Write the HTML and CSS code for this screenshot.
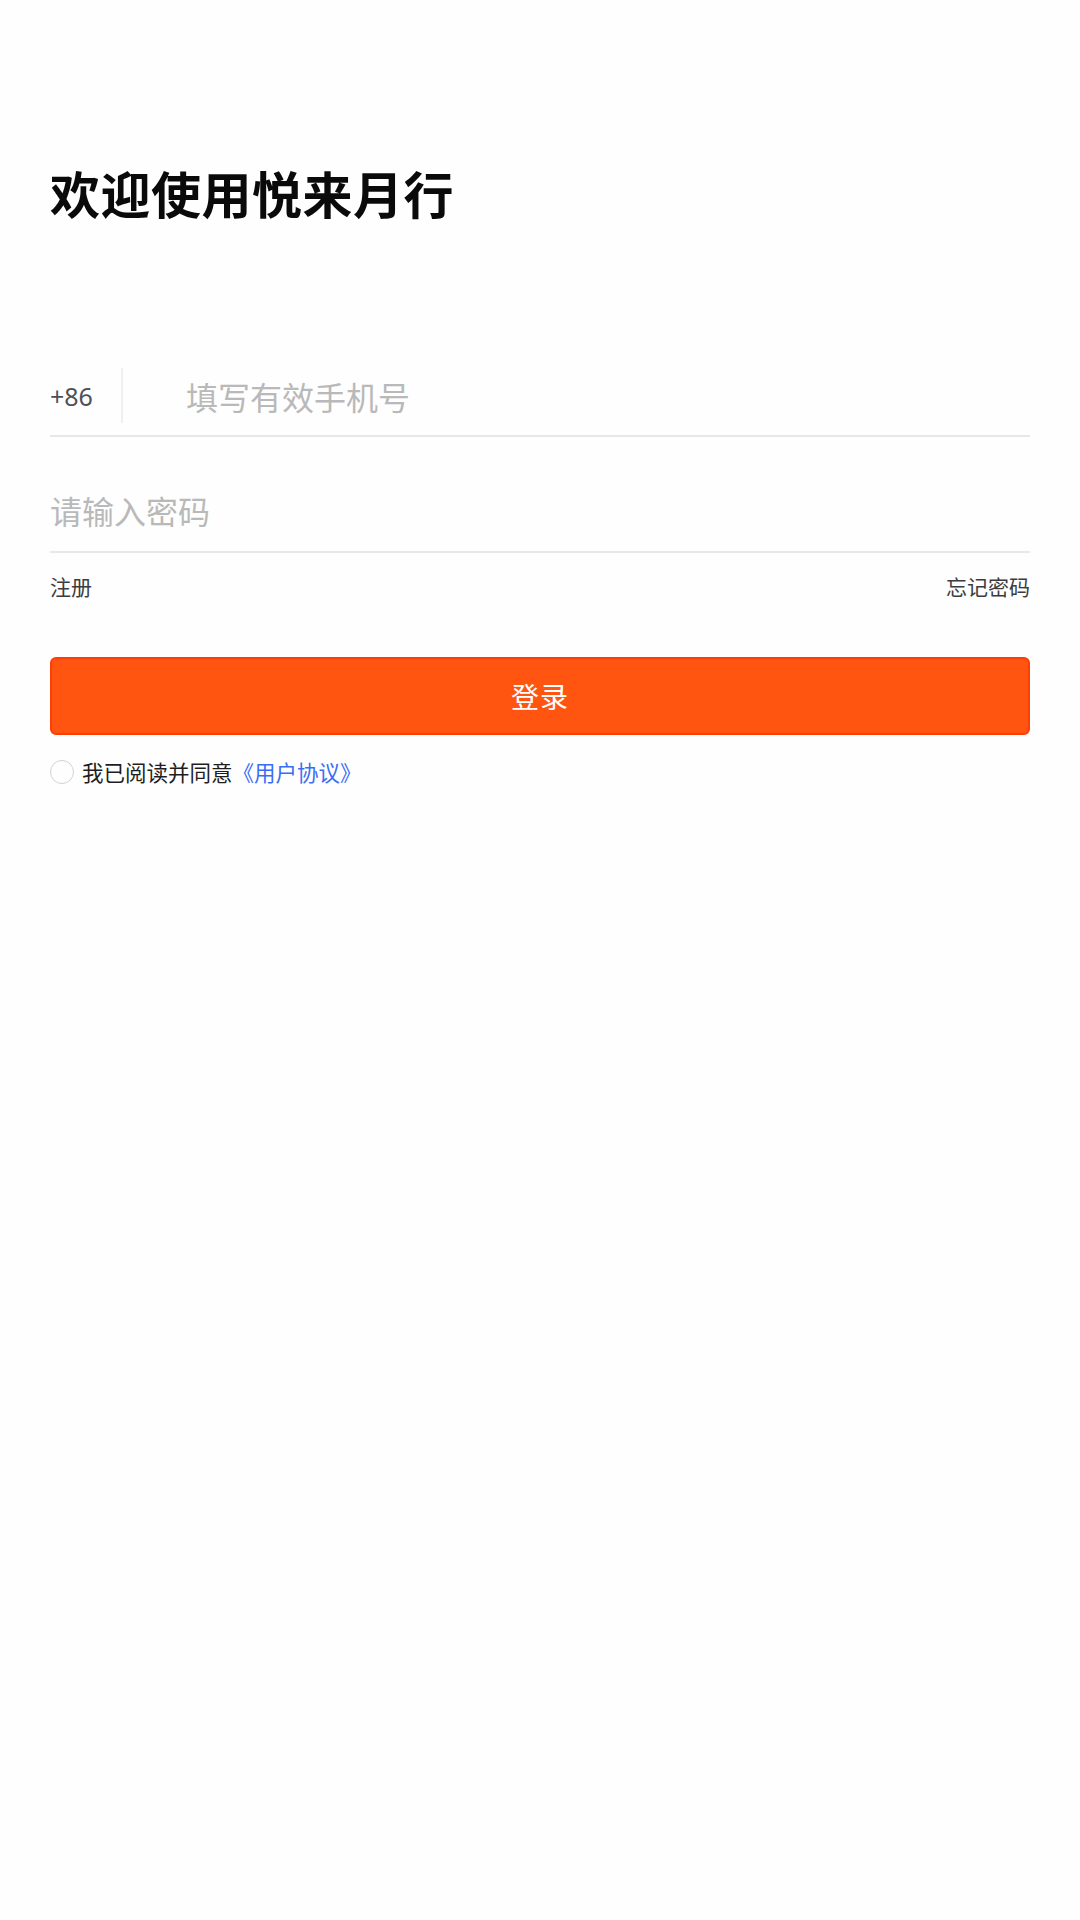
FILE: index.html
```html
<!DOCTYPE html>
<html lang="zh-CN">
<head>
<meta charset="utf-8">
<title>欢迎使用悦来月行</title>
<link rel="stylesheet" href="styles.css">
</head>
<body>
<main class="page">
  <h1 class="title">欢迎使用悦来月行</h1>
  <div class="field phone">
    <span class="code">+86</span>
    <span class="divider"></span>
    <span class="placeholder">填写有效手机号</span>
  </div>
  <div class="field password">
    <span class="placeholder">请输入密码</span>
  </div>
  <div class="links">
    <span>注册</span>
    <span>忘记密码</span>
  </div>
  <button class="login" type="button">登录</button>
  <div class="agree">
    <span class="radio"></span>
    <span class="agree-text">我已阅读并同意<span class="link">《用户协议》</span></span>
  </div>
</main>
</body>
</html>
```
FILE: styles.css
```css
html, body {
  margin: 0;
  padding: 0;
  background: #fefefe;
}
body {
  width: 1080px;
  height: 1920px;
  font-family: "Noto Sans CJK SC", "Noto Sans", sans-serif;
}
.page {
  padding: 162px 50px 0 50px;
  display: flex;
  flex-direction: column;
}
.title {
  margin: 0;
  font-size: 50px;
  line-height: 60px;
  font-weight: 700;
  color: #0a0a0a;
  letter-spacing: 0.5px;
}
.field {
  border-bottom: 2px solid #e8e8ea;
  display: flex;
}
.phone {
  margin-top: 142px;
  height: 71px;
  align-items: flex-start;
}
.phone > * {
  margin-top: 4px;
}
.code {
  height: 56px;
  line-height: 56px;
  font-size: 25px;
  color: #4d505b;
  font-family: "Noto Sans", "Noto Sans CJK SC", sans-serif;
  width: 71px;
}
.divider {
  width: 2px;
  height: 55px;
  background: #efefef;
}
.placeholder {
  font-size: 32px;
  line-height: 56px;
  height: 56px;
  color: #b9b9b9;
}
.phone .placeholder {
  margin-left: 63px;
}
.password {
  padding-top: 53px;
  padding-bottom: 21px;
}
.password .placeholder {
  line-height: 40px;
  height: 40px;
}
.links {
  margin-top: 19px;
  display: flex;
  justify-content: space-between;
  font-size: 21px;
  line-height: 28px;
  color: #3c3c40;
}
.login {
  margin-top: 57px;
  height: 78px;
  width: 100%;
  border: 2px solid #ff3d05;
  border-radius: 6px;
  background: #ff5510;
  color: #ffffff;
  font-family: "Noto Sans CJK SC", sans-serif;
  font-size: 28px;
  padding: 0;
  letter-spacing: 1px;
}
.agree {
  margin-top: 22px;
  display: flex;
  align-items: center;
  height: 30px;
}
.radio {
  width: 22px;
  height: 22px;
  border: 1.5px solid #d2d2d2;
  border-radius: 50%;
  flex-shrink: 0;
}
.agree-text {
  margin-left: 8px;
  font-size: 21.5px;
  line-height: 30px;
  color: #1e1e1e;
}
.link {
  color: #3a6df4;
}
```
